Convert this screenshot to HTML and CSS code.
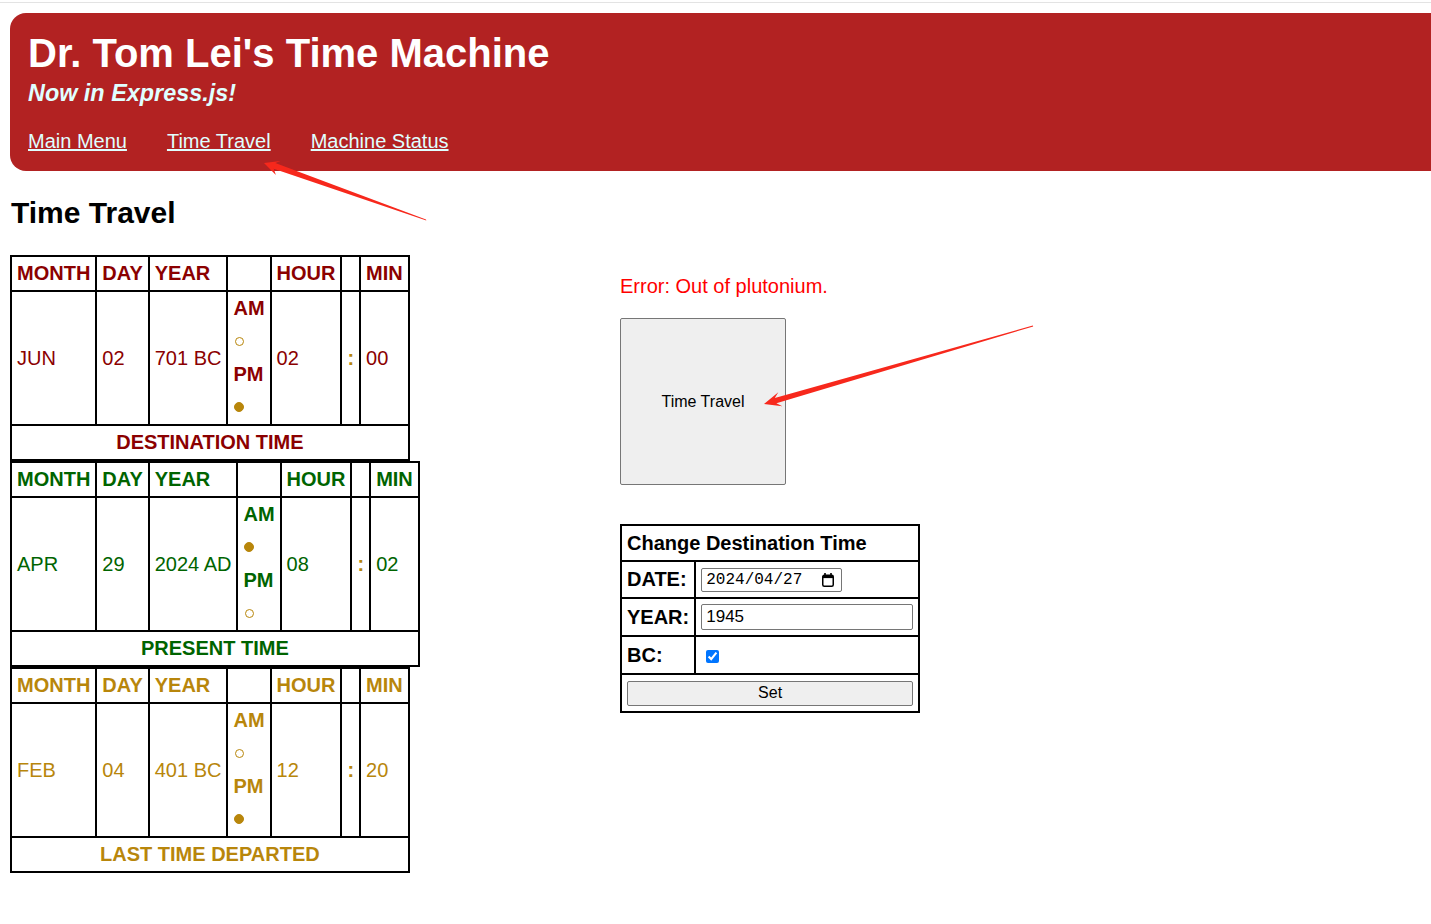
FILE: index.html
```html
<!DOCTYPE html>
<html lang="en">
<head>
<meta charset="utf-8">
<title>Time Travel</title>
<link rel="stylesheet" href="styles.css">
</head>
<body>
<div class="topline"></div>
<header class="banner">
  <h1 class="title">Dr. Tom Lei's Time Machine</h1>
  <h3 class="subtitle">Now in Express.js!</h3>
  <nav class="nav">
    <a href="#">Main Menu</a>
    <a href="#">Time Travel</a>
    <a href="#">Machine Status</a>
  </nav>
</header>
<main class="main">
  <h2 class="page-title">Time Travel</h2>
  <div class="layout">
    <div class="clocks">
      <table class="clock dest">
        <tr class="labels"><td>MONTH</td><td>DAY</td><td>YEAR</td><td></td><td>HOUR</td><td></td><td>MIN</td></tr>
        <tr><td>JUN</td><td>02</td><td>701 BC</td><td class="ampm"><div>AM</div><div><span class="dot"></span></div><div>PM</div><div><span class="dot on"></span></div></td><td>02</td><td class="colon">:</td><td>00</td></tr>
        <tr><td colspan="7" class="caption">DESTINATION TIME</td></tr>
      </table>
      <table class="clock present">
        <tr class="labels"><td>MONTH</td><td>DAY</td><td>YEAR</td><td></td><td>HOUR</td><td></td><td>MIN</td></tr>
        <tr><td>APR</td><td>29</td><td>2024 AD</td><td class="ampm"><div>AM</div><div><span class="dot on"></span></div><div>PM</div><div><span class="dot"></span></div></td><td>08</td><td class="colon">:</td><td>02</td></tr>
        <tr><td colspan="7" class="caption">PRESENT TIME</td></tr>
      </table>
      <table class="clock last">
        <tr class="labels"><td>MONTH</td><td>DAY</td><td>YEAR</td><td></td><td>HOUR</td><td></td><td>MIN</td></tr>
        <tr><td>FEB</td><td>04</td><td>401 BC</td><td class="ampm"><div>AM</div><div><span class="dot"></span></div><div>PM</div><div><span class="dot on"></span></div></td><td>12</td><td class="colon">:</td><td>20</td></tr>
        <tr><td colspan="7" class="caption">LAST TIME DEPARTED</td></tr>
      </table>
    </div>
    <div class="side">
      <p class="error">Error: Out of plutonium.</p>
      <button class="travel-btn" type="button">Time Travel</button>
      <table class="form-table">
        <tr class="row-head"><td colspan="2" class="form-head">Change Destination Time</td></tr>
        <tr class="row-date"><td class="lbl">DATE:</td><td><span class="date-field"><span class="date-text">2024/04/27</span><svg class="cal" width="12" height="14" viewBox="0 0 12 14"><rect x="2.2" y="0" width="1.6" height="3" fill="#000"/><rect x="8.2" y="0" width="1.6" height="3" fill="#000"/><rect x="0.75" y="2.25" width="10.5" height="11" rx="1.5" fill="none" stroke="#000" stroke-width="1.5"/><rect x="1" y="2.5" width="10" height="2.6" fill="#000"/></svg></span></td></tr>
        <tr class="row"><td class="lbl">YEAR:</td><td><input class="year-input" type="text" value="1945"></td></tr>
        <tr class="row"><td class="lbl">BC:</td><td><input class="bc" type="checkbox" checked></td></tr>
        <tr class="row"><td colspan="2"><button class="set-btn" type="button">Set</button></td></tr>
      </table>
    </div>
  </div>
</main>
<svg class="annotations" width="1431" height="924" viewBox="0 0 1431 924">
  <polygon points="264,163 280.5,161 275.3,163 426,219.6 426.3,220.4 273.7,168.8 275.9,175" fill="#f7281c"/>
  <polygon points="764,404 778.3,392.3 774.8,398.1 1032.8,325.6 1033.2,326.4 776.4,403.2 782.3,406.3" fill="#f7281c"/>
</svg>
</body>
</html>
```

FILE: styles.css
```css
* { box-sizing: border-box; }
html, body { margin: 0; padding: 0; background: #fff; }
body {
  font-family: "Liberation Sans", Arial, sans-serif;
  font-size: 20px;
  color: #000;
  position: relative;
  min-height: 924px;
}
.topline { height: 1px; margin-top: 2px; background: #e3e3e3; }
.banner {
  margin: 10px 0 0 10px;
  background: #b22222;
  border-radius: 16px 0 0 16px;
  padding: 17px 18px 18px;
}
.title { margin: 0; font-size: 40px; line-height: 46px; font-weight: bold; color: #fff; }
.subtitle { margin: 4px 0 0; font-size: 23.4px; line-height: 27px; font-style: italic; font-weight: bold; color: #e0ffff; }
.nav { display: flex; gap: 40px; margin-top: 23px; line-height: 23px; }
.nav a { color: #e0ffff; text-decoration: underline; }

.main { padding: 0 10px; }
.page-title { margin: 25px 0 25px 1px; font-size: 30px; line-height: 34px; font-weight: bold; }
.layout { display: grid; grid-template-columns: 610px 1fr; align-items: start; }

.clock { border-collapse: collapse; border: 2px solid #000; }
.clock td { border: 2px solid #000; padding: 5px; line-height: 23px; white-space: nowrap; text-align: left; }
.clock .labels td { font-weight: bold; }
.clock td.ampm { padding: 0 5px; font-weight: bold; }
.ampm div { height: 33px; line-height: 33px; }
.dot {
  display: inline-block; width: 9px; height: 9px;
  border: 1px solid #b8860b; border-radius: 50%;
  vertical-align: middle; margin: -3px 0 0 2px;
}
.dot.on { background: #b8860b; width: 10px; height: 10px; margin-left: 1px; }
.clock td.colon { color: #b8860b; font-weight: bold; }
.clock td.caption { text-align: center; font-weight: bold; }
.dest { color: #8b0000; }
.present { color: #006400; }
.last { color: #b8860b; }

.side { padding-top: 20px; }
.error { margin: 0 0 20px; color: #ff0000; line-height: 23px; }
.travel-btn {
  display: block; width: 166px; height: 167px; margin: 0 0 39px;
  background: #efefef; border: 1px solid #767676; border-radius: 2px;
  font-family: "Liberation Sans", Arial, sans-serif; font-size: 16px; color: #000;
  padding: 0;
}
.form-table { border-collapse: collapse; border: 2px solid #000; }
.form-table td { border: 2px solid #000; padding: 0 5px; line-height: 23px; white-space: nowrap; }
.form-table .lbl, .form-table .form-head { font-weight: bold; }
.row-head { height: 36px; }
.row-date { height: 37px; }
.row { height: 38px; }
.date-field {
  display: inline-flex; align-items: center; justify-content: space-between;
  width: 141px; height: 24px; vertical-align: middle;
  border: 1px solid #767676; border-radius: 2px; padding: 0 7px 0 4px;
}
.date-text { font-family: "Liberation Mono", "DejaVu Sans Mono", monospace; font-size: 16px; line-height: 20px; }
.cal { display: block; }
.year-input {
  width: 212px; height: 26px; vertical-align: middle;
  border: 1px solid #767676; border-radius: 2px; padding: 0 4px;
  font-family: "Liberation Sans", Arial, sans-serif; font-size: 17px; color: #000;
}
.bc { margin: 3px 3px 3px 5px; vertical-align: middle; }
.set-btn {
  display: block; width: 100%; height: 25px;
  background: #efefef; border: 1px solid #767676; border-radius: 2px;
  font-family: "Liberation Sans", Arial, sans-serif; font-size: 16px; color: #000;
  padding: 0;
}
.annotations { position: absolute; top: 0; left: 0; pointer-events: none; }
```
